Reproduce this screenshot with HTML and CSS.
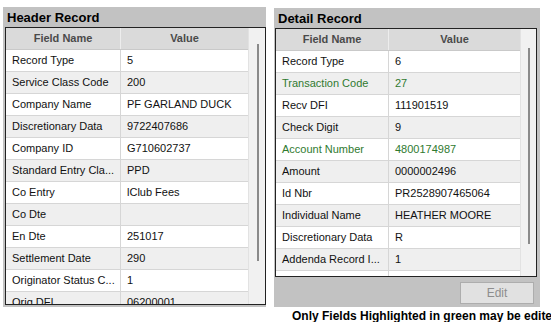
FILE: index.html
```html
<!DOCTYPE html>
<html>
  <head>
    <title>ACH Record Viewer</title>
    <link rel="stylesheet" href="styles.css">
  </head>
  <body>
    <div class="panel panel-header">
      <div class="panel-title">Header Record</div>
      <div class="grid-box">
        <div class="grid">
          <div class="row head"><div class="cell">Field Name</div><div class="cell">Value</div></div>
          <div class="row"><div class="cell">Record Type</div><div class="cell">5</div></div>
          <div class="row alt"><div class="cell">Service Class Code</div><div class="cell">200</div></div>
          <div class="row"><div class="cell">Company Name</div><div class="cell">PF GARLAND DUCK</div></div>
          <div class="row alt"><div class="cell">Discretionary Data</div><div class="cell">9722407686</div></div>
          <div class="row"><div class="cell">Company ID</div><div class="cell">G710602737</div></div>
          <div class="row alt"><div class="cell">Standard Entry Cla...</div><div class="cell">PPD</div></div>
          <div class="row"><div class="cell">Co Entry</div><div class="cell">lClub Fees</div></div>
          <div class="row alt"><div class="cell">Co Dte</div><div class="cell"></div></div>
          <div class="row"><div class="cell">En Dte</div><div class="cell">251017</div></div>
          <div class="row alt"><div class="cell">Settlement Date</div><div class="cell">290</div></div>
          <div class="row"><div class="cell">Originator Status C...</div><div class="cell">1</div></div>
          <div class="row alt"><div class="cell">Orig DFI</div><div class="cell">06200001</div></div>
        </div>
        <div class="scroll"><div class="thumb"></div></div>
      </div>
    </div>

    <div class="side">
      <div class="panel panel-detail">
        <div class="panel-title">Detail Record</div>
        <div class="grid-box">
          <div class="grid">
            <div class="row head"><div class="cell">Field Name</div><div class="cell">Value</div></div>
            <div class="row"><div class="cell">Record Type</div><div class="cell">6</div></div>
            <div class="row alt editable"><div class="cell">Transaction Code</div><div class="cell">27</div></div>
            <div class="row"><div class="cell">Recv DFI</div><div class="cell">111901519</div></div>
            <div class="row alt"><div class="cell">Check Digit</div><div class="cell">9</div></div>
            <div class="row editable"><div class="cell">Account Number</div><div class="cell">4800174987</div></div>
            <div class="row alt"><div class="cell">Amount</div><div class="cell">0000002496</div></div>
            <div class="row"><div class="cell">Id Nbr</div><div class="cell">PR2528907465064</div></div>
            <div class="row alt"><div class="cell">Individual Name</div><div class="cell">HEATHER MOORE</div></div>
            <div class="row"><div class="cell">Discretionary Data</div><div class="cell">R</div></div>
            <div class="row alt"><div class="cell">Addenda Record I...</div><div class="cell">1</div></div>
            <div class="row"><div class="cell"></div><div class="cell"></div></div>
          </div>
          <div class="scroll"><div class="thumb"></div></div>
        </div>
        <div class="panel-footer">
          <button class="edit-btn" disabled>Edit</button>
        </div>
      </div>
      <div class="note">Only Fields Highlighted in green may be edited</div>
    </div>

    <div class="edge"></div>
  </body>
</html>
```

FILE: styles.css
```css
body {
  margin: 0;
  background: #fff;
  font-family: "Liberation Sans", Arial, sans-serif;
  font-size: 11px;
  color: #111;
  display: flex;
  align-items: flex-start;
  overflow: hidden;
  width: 551px;
  height: 322px;
}
.panel {
  background: #c2c2c2;
  display: flex;
  flex-direction: column;
}
.panel-header {
  margin: 7px 0 0 3px;
  width: 265px;
  height: 300px;
}
.panel-title {
  height: 20px;
  line-height: 22px;
  padding-left: 4px;
  font-size: 13px;
  font-weight: bold;
  color: #000;
  overflow: hidden;
}
.grid-box {
  display: flex;
  background: #fff;
  border: 1px solid #222;
  box-sizing: border-box;
  overflow: hidden;
}
.panel-header .grid-box {
  margin-left: 2px;
  width: 261px;
  height: 278px;
}
.grid {
  flex: 1;
  overflow: hidden;
}
.row {
  display: grid;
  grid-template-columns: 115px 1fr;
  height: 22px;
  border-bottom: 1px solid #d6d6d6;
  box-sizing: border-box;
}
.row.alt {
  background: #efefef;
}
.row.editable {
  color: #2f7a2f;
}
.cell {
  padding-left: 6px;
  line-height: 21px;
  white-space: nowrap;
  overflow: hidden;
}
.cell:first-child {
  border-right: 1px solid #d6d6d6;
}
.row.head {
  background: #dadada;
  border-bottom: 1px solid #c9c9c9;
}
.row.head .cell {
  padding-left: 0;
  text-align: center;
  font-weight: bold;
  color: #4a4a4a;
}
.row.head .cell:first-child {
  border-right: 1px solid #ededed;
}
.scroll {
  width: 17px;
  background: #f1f1f1;
  border-left: 1px solid #e2e2e2;
  box-sizing: border-box;
  position: relative;
}
.thumb {
  position: absolute;
  left: 8px;
  top: 16px;
  width: 2px;
  height: 217px;
  background: #8a8a8a;
}
.side {
  margin: 8px 0 0 8px;
  display: flex;
  flex-direction: column;
}
.panel-detail {
  width: 266px;
  height: 299px;
}
.panel-detail .grid-box {
  margin-left: 1px;
  width: 262px;
  height: 249px;
}
.panel-detail .row {
  grid-template-columns: 113px 1fr;
}
.panel-detail .scroll {
  width: 16px;
}
.panel-detail .thumb {
  left: 7px;
  top: 19px;
  height: 196px;
}
.panel-footer {
  display: flex;
  justify-content: flex-end;
  padding: 5px 6px 0 0;
}
.edit-btn {
  width: 74px;
  height: 22px;
  background: #e1e1e1;
  border: 1px solid #adadad;
  color: #8d8d8d;
  font-family: "Liberation Sans", Arial, sans-serif;
  font-size: 12px;
  padding: 0;
}
.note {
  padding: 2px 0 0 18px;
  font-size: 12px;
  font-weight: bold;
  color: #000;
  white-space: nowrap;
}
.edge {
  margin: 18px 0 0 6px;
  width: 0;
  height: 287px;
  border-left: 1px solid #d0d0d0;
}
```
